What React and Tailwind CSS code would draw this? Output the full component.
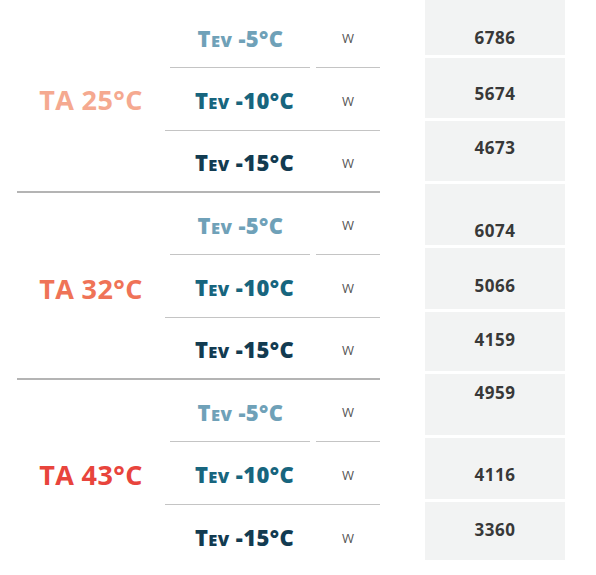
import React from "react";

const groups = [
  { label: "TA 25°C", color: "text-[#f5a990]" },
  { label: "TA 32°C", color: "text-[#ef7357]" },
  { label: "TA 43°C", color: "text-[#e8443c]" },
];

const tevs = [
  { t: "-5°C", color: "text-[#6fa1b8]" },
  { t: "-10°C", color: "text-[#17657e]" },
  { t: "-15°C", color: "text-[#123b51]" },
];

const cells = [
  { v: "6786", h: "h-[55px]", pt: "pt-[28px]" },
  { v: "5674", h: "h-[60px]", pt: "pt-[26px]" },
  { v: "4673", h: "h-[60px]", pt: "pt-[17px]" },
  { v: "6074", h: "h-[61px]", pt: "pt-[37px]" },
  { v: "5066", h: "h-[61px]", pt: "pt-[28px]" },
  { v: "4159", h: "h-[59px]", pt: "pt-[18px]" },
  { v: "4959", h: "h-[61px]", pt: "pt-[9px]" },
  { v: "4116", h: "h-[61px]", pt: "pt-[27px]" },
  { v: "3360", h: "h-[58px]", pt: "pt-[18px]" },
];

function Tev({ t, color }) {
  return (
    <span className={`font-extrabold text-[22px] leading-[26px] tracking-[0.4px] ${color}`}>
      T<span className="text-[16.5px]">EV</span> {t}
    </span>
  );
}

function Group({ g, last, idx }) {
  return (
    <div className={`flex ${last ? "" : "border-b-2 border-[#b4b4b4]"}`}>
      <div className={`w-[148px] flex items-center justify-center ${idx === 1 ? "pt-[8px]" : "pt-[4px]"} font-bold text-[27px] tracking-[0.4px] ${g.color}`}>
        {g.label}
      </div>
      <div className="flex flex-col">
        <div className="flex h-[62px] gap-[6px]">
          <div className="ml-[5px] w-[140px] border-b border-[#c4c4c4] flex items-center justify-center pt-[5px] pl-[1px]">
            <Tev {...tevs[0]} />
          </div>
          <div className="w-[64px] border-b border-[#c4c4c4] flex items-center justify-center pt-[5px] text-[13px] text-[#555]">
            W
          </div>
        </div>
        <div className="flex h-[63px] border-b border-[#c4c4c4]">
          <div className="w-[151px] flex items-center justify-center pt-[5px] pl-[8px]">
            <Tev {...tevs[1]} />
          </div>
          <div className="w-[64px] flex items-center justify-center pt-[5px] text-[13px] text-[#555]">
            W
          </div>
        </div>
        <div className={`flex ${last ? "h-[62px]" : "h-[60px]"}`}>
          <div className="w-[151px] flex items-center justify-center pt-[5px] pl-[8px]">
            <Tev {...tevs[2]} />
          </div>
          <div className="w-[64px] flex items-center justify-center pt-[5px] text-[13px] text-[#555]">
            W
          </div>
        </div>
      </div>
    </div>
  );
}

export default function App() {
  return (
    <div className="w-[596px] h-[575px] bg-white flex font-['Open_Sans',sans-serif]">
      <div className="ml-[17px] pt-[6px] w-[363px] flex flex-col">
        {groups.map((g, i) => (
          <Group key={i} g={g} idx={i} last={i === 2} />
        ))}
      </div>
      <div className="ml-[45px] w-[140px] flex flex-col gap-[3px]">
        {cells.map((c, i) => (
          <div key={i} className={`bg-[#f2f3f3] ${c.h} ${c.pt} text-center font-bold text-[17px] leading-[20px] text-[#383838] tracking-[0.5px]`}>
            {c.v}
          </div>
        ))}
      </div>
    </div>
  );
}
